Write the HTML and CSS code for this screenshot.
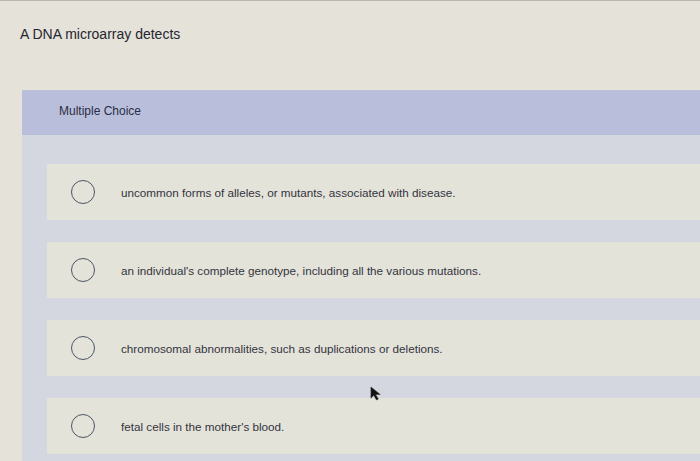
FILE: index.html
```html
<!DOCTYPE html>
<html>
<head>
<meta charset="utf-8">
<link rel="stylesheet" href="styles.css">
</head>
<body>
<div class="page">
  <h1 class="question">A DNA microarray detects</h1>
  <div class="card">
    <div class="card-head">Multiple Choice</div>
    <div class="card-body">
      <div class="option"><span class="radio"></span><span class="label">uncommon forms of alleles, or mutants, associated with disease.</span></div>
      <div class="option"><span class="radio"></span><span class="label">an individual's complete genotype, including all the various mutations.</span></div>
      <div class="option"><span class="radio"></span><span class="label">chromosomal abnormalities, such as duplications or deletions.</span></div>
      <div class="option"><span class="radio"></span><span class="label">fetal cells in the mother's blood.</span></div>
    </div>
  </div>
  <svg class="cursor" width="13" height="15" viewBox="0 0 14 16"><path d="M1 1 L1 13 L4 10 L7 15 L9 14 L6 9 L11 9 Z" fill="#111" stroke="#333" stroke-width="0.6"/></svg>
</div>
</body>
</html>
```
FILE: styles.css
```css
html, body {
  margin: 0;
  padding: 0;
}
body {
  background: #e4e2d9;
  font-family: "Liberation Sans", Arial, sans-serif;
  color: #2b2c38;
  overflow: hidden;
}
.page {
  position: relative;
  width: 700px;
  height: 461px;
  padding-top: 24px;
  box-sizing: border-box;
  border-top: 1px solid #b9b8b4;
  overflow: hidden;
}
.question {
  margin: 0 0 0 20px;
  font-size: 14px;
  font-weight: normal;
  line-height: 18px;
  color: #262630;
}
.card {
  margin-left: 22px;
  margin-top: 47px;
}
.card-head {
  background: #b9bedb;
  height: 45px;
  box-sizing: border-box;
  padding-left: 37px;
  padding-top: 14px;
  font-size: 12px;
  line-height: 14px;
  color: #2a2d44;
}
.card-body {
  background: #d4d6e0;
  padding: 29px 0 22px 25px;
  display: flex;
  flex-direction: column;
  gap: 22px;
}
.option {
  background: #e4e3d9;
  height: 56px;
  display: flex;
  align-items: center;
  padding-left: 21px;
}
.radio {
  width: 24px;
  height: 24px;
  border: 1.5px solid #4b5563;
  border-radius: 50%;
  box-sizing: border-box;
  flex: none;
  margin-left: 3px;
}
.label {
  margin-left: 26px;
  font-size: 11.7px;
  color: #33343f;
}
.cursor {
  position: absolute;
  left: 370px;
  top: 385px;
}
```
